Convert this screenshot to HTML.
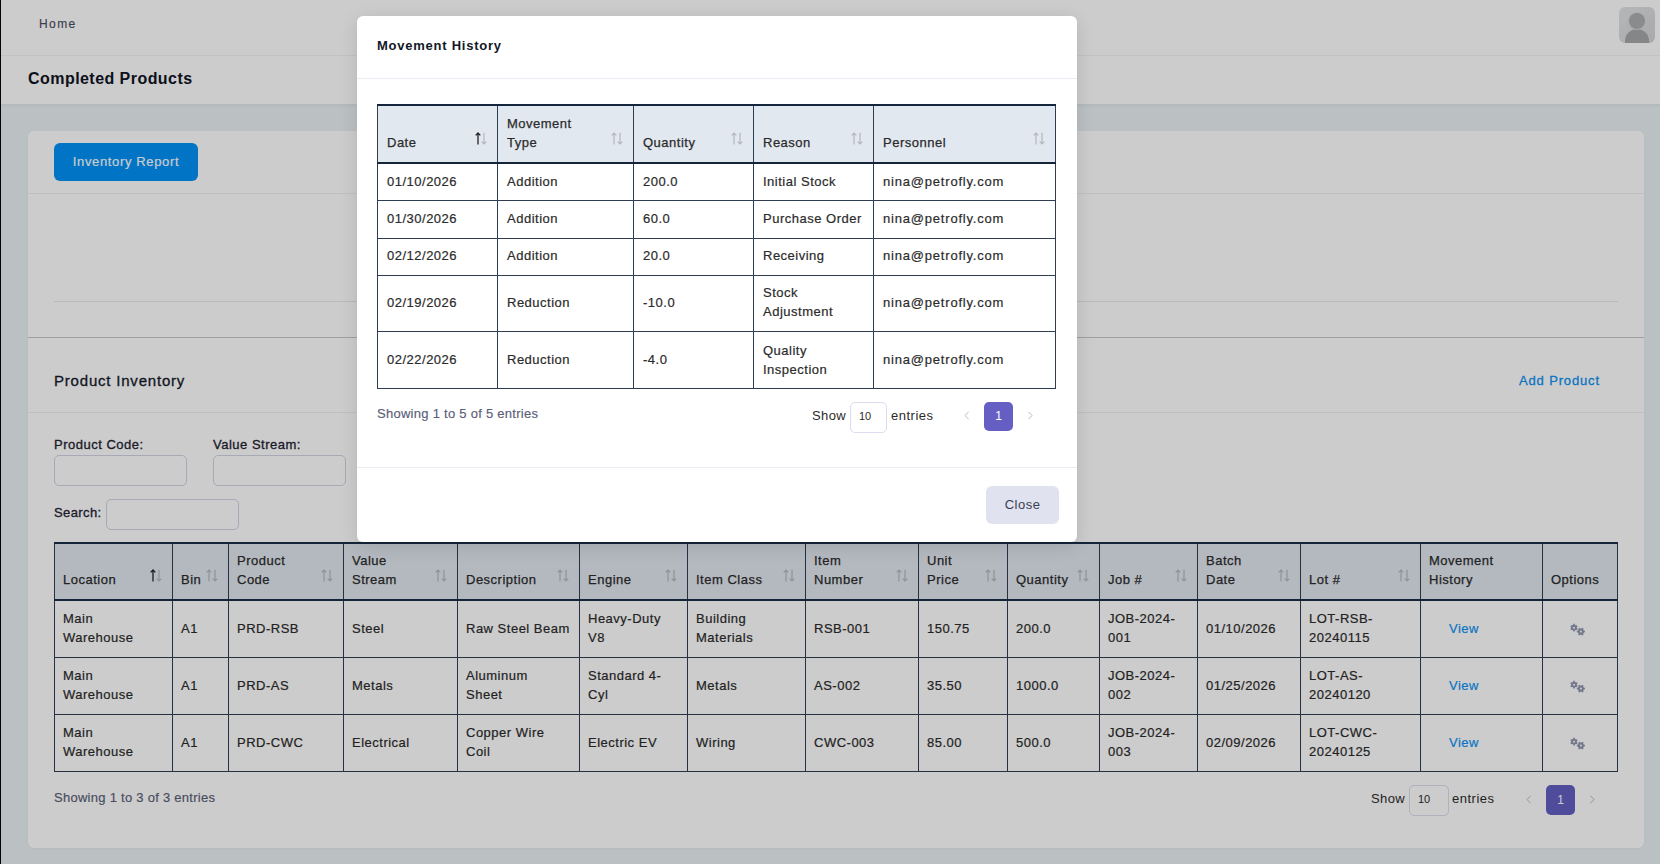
<!DOCTYPE html>
<html><head><meta charset="utf-8">
<style>
*{box-sizing:border-box;margin:0;padding:0}
html,body{width:1660px;height:864px;overflow:hidden}
body{position:relative;background:#eaf2f4;font-family:"Liberation Sans",sans-serif;color:#2b2b2b;font-size:13px;letter-spacing:.5px}
.abs{position:absolute}
.lb{left:0;top:0;width:1px;height:864px;background:#06060e}
.hdr{left:1px;top:0;width:1659px;height:56px;background:#fff;border-bottom:1px solid #f2f3f7}
.home{left:39px;top:17px;font-size:12px;color:#4a4e64;letter-spacing:1.4px}
.avatar{left:1619px;top:7px;width:36px;height:36px;border-radius:6px;background:linear-gradient(135deg,#e4e5e7,#d2d3d5);overflow:hidden}
.avatar .hd{position:absolute;left:10px;top:5.5px;width:16px;height:16px;border-radius:50%;background:#adaeb1;box-shadow:0 0 0 1px #d6d7d9}
.avatar .bd{position:absolute;left:6px;top:22px;width:24px;height:20px;border-radius:12px 12px 0 0;background:#a7a8ab}
.tbar{left:1px;top:56px;width:1659px;height:48px;background:#fff;box-shadow:0 2px 3px rgba(20,40,50,.05)}
.ttl{left:28px;top:70px;font-size:16px;font-weight:bold;color:#0f1424;letter-spacing:.45px}
.card{left:28px;top:131px;width:1616px;height:717px;background:#fff;border-radius:6px;box-shadow:0 1px 3px rgba(20,30,40,.05)}
.btn1{left:54px;top:143px;width:144px;height:38px;border-radius:6px;background:#0392f7;color:#fff;font-size:13px;line-height:38px;text-align:center;letter-spacing:.65px}
.hline{height:1px;background:#f0f1f5}
.input{border:1px solid #d2d4e4;border-radius:5px;background:#fff;height:31px;width:133px}
table{border-collapse:collapse;table-layout:fixed}
td,th{font-weight:normal;text-align:left;vertical-align:middle;border:1px solid #2f3d52}
th{background:#e2e8f0;vertical-align:bottom;position:relative}
.srt{position:absolute;right:10px;bottom:17px;width:11px;height:12px}

.mt td,.mt th{padding:9px 8px 9px 9px;line-height:18.5px;}.mt td{line-height:19px;padding-top:8px;padding-bottom:8px;border:1px solid #2f3d52}
.mt thead th{border-top:2px solid #15253c;border-bottom:2px solid #15253c;padding:9px 26px 10px 9px}
.srt{position:absolute;right:10px;bottom:17px;width:12px;height:13px}

.pt td,.pt th{padding:8px 8px 10px 8px;line-height:19px;border:1px solid #2f3d52}
.pt thead th{border-top:2px solid #1b2d46;border-bottom:2px solid #1b2d46;padding:7px 24px 10px 8px;height:57px}
.pt .ctr{text-align:left;padding-left:28px}
.lnk{color:#0e92f4}
td{-webkit-text-stroke:.2px currentColor}th{-webkit-text-stroke:.25px currentColor}.md{-webkit-text-stroke:.3px currentColor}.rg{-webkit-text-stroke:.15px currentColor}
.mt tr.up td{padding-top:7px;padding-bottom:9px}
</style></head><body>
<div class="abs lb"></div>
<div class="abs hdr"></div>
<div class="abs rg home">Home</div>
<div class="abs avatar"><div class="bd"></div><div class="hd"></div></div>
<div class="abs tbar"></div>
<div class="abs ttl">Completed Products</div>

<div class="abs card"></div>
<div class="abs rg btn1">Inventory Report</div>
<div class="abs hline" style="left:28px;top:193px;width:1616px"></div>
<div class="abs hline" style="left:54px;top:301px;width:1564px;background:#e6e7ee"></div>
<div class="abs hline" style="left:28px;top:337px;width:1616px;background:#c8c8c8"></div>



<div class="abs md" style="left:54px;top:372px;font-size:15px;color:#141a2b;letter-spacing:.8px">Product Inventory</div>
<div class="abs md lnk" style="left:1519px;top:373px;font-size:13px;letter-spacing:.85px">Add Product</div>
<div class="abs hline" style="left:28px;top:412px;width:1616px"></div>
<div class="abs md" style="left:54px;top:437px;font-size:13px;color:#1f2333;letter-spacing:.5px">Product Code:</div>
<div class="abs md" style="left:213px;top:437px;font-size:13px;color:#1f2333;letter-spacing:.5px">Value Stream:</div>
<div class="abs input" style="left:54px;top:455px"></div>
<div class="abs input" style="left:213px;top:455px"></div>
<div class="abs md" style="left:54px;top:505px;font-size:13px;color:#1f2333;letter-spacing:.4px">Search:</div>
<div class="abs input" style="left:106px;top:499px"></div>
<table class="abs pt" style="left:54px;top:542px;width:1564px"><colgroup><col style="width:118px"><col style="width:56px"><col style="width:115px"><col style="width:114px"><col style="width:122px"><col style="width:108px"><col style="width:118px"><col style="width:113px"><col style="width:89px"><col style="width:92px"><col style="width:98px"><col style="width:103px"><col style="width:120px"><col style="width:122px"><col style="width:75px"></colgroup><thead><tr><th>Location<svg class="srt" viewBox="0 0 12 13"><path d="M3 12.5V1M.7 3.4L3 1l2.3 2.4" stroke="#222" stroke-width="1.3" fill="none"/><path d="M9 .8V12M6.7 9.6L9 12l2.3-2.4" stroke="#b3b7be" stroke-width="1.2" fill="none"/></svg></th><th>Bin<svg class="srt" viewBox="0 0 12 13"><path d="M3 12.5V1M.7 3.4L3 1l2.3 2.4" stroke="#b3b7be" stroke-width="1.2" fill="none"/><path d="M9 .8V12M6.7 9.6L9 12l2.3-2.4" stroke="#b3b7be" stroke-width="1.2" fill="none"/></svg></th><th>Product<br>Code<svg class="srt" viewBox="0 0 12 13"><path d="M3 12.5V1M.7 3.4L3 1l2.3 2.4" stroke="#b3b7be" stroke-width="1.2" fill="none"/><path d="M9 .8V12M6.7 9.6L9 12l2.3-2.4" stroke="#b3b7be" stroke-width="1.2" fill="none"/></svg></th><th>Value<br>Stream<svg class="srt" viewBox="0 0 12 13"><path d="M3 12.5V1M.7 3.4L3 1l2.3 2.4" stroke="#b3b7be" stroke-width="1.2" fill="none"/><path d="M9 .8V12M6.7 9.6L9 12l2.3-2.4" stroke="#b3b7be" stroke-width="1.2" fill="none"/></svg></th><th>Description<svg class="srt" viewBox="0 0 12 13"><path d="M3 12.5V1M.7 3.4L3 1l2.3 2.4" stroke="#b3b7be" stroke-width="1.2" fill="none"/><path d="M9 .8V12M6.7 9.6L9 12l2.3-2.4" stroke="#b3b7be" stroke-width="1.2" fill="none"/></svg></th><th>Engine<svg class="srt" viewBox="0 0 12 13"><path d="M3 12.5V1M.7 3.4L3 1l2.3 2.4" stroke="#b3b7be" stroke-width="1.2" fill="none"/><path d="M9 .8V12M6.7 9.6L9 12l2.3-2.4" stroke="#b3b7be" stroke-width="1.2" fill="none"/></svg></th><th>Item Class<svg class="srt" viewBox="0 0 12 13"><path d="M3 12.5V1M.7 3.4L3 1l2.3 2.4" stroke="#b3b7be" stroke-width="1.2" fill="none"/><path d="M9 .8V12M6.7 9.6L9 12l2.3-2.4" stroke="#b3b7be" stroke-width="1.2" fill="none"/></svg></th><th>Item<br>Number<svg class="srt" viewBox="0 0 12 13"><path d="M3 12.5V1M.7 3.4L3 1l2.3 2.4" stroke="#b3b7be" stroke-width="1.2" fill="none"/><path d="M9 .8V12M6.7 9.6L9 12l2.3-2.4" stroke="#b3b7be" stroke-width="1.2" fill="none"/></svg></th><th>Unit<br>Price<svg class="srt" viewBox="0 0 12 13"><path d="M3 12.5V1M.7 3.4L3 1l2.3 2.4" stroke="#b3b7be" stroke-width="1.2" fill="none"/><path d="M9 .8V12M6.7 9.6L9 12l2.3-2.4" stroke="#b3b7be" stroke-width="1.2" fill="none"/></svg></th><th>Quantity<svg class="srt" viewBox="0 0 12 13"><path d="M3 12.5V1M.7 3.4L3 1l2.3 2.4" stroke="#b3b7be" stroke-width="1.2" fill="none"/><path d="M9 .8V12M6.7 9.6L9 12l2.3-2.4" stroke="#b3b7be" stroke-width="1.2" fill="none"/></svg></th><th>Job #<svg class="srt" viewBox="0 0 12 13"><path d="M3 12.5V1M.7 3.4L3 1l2.3 2.4" stroke="#b3b7be" stroke-width="1.2" fill="none"/><path d="M9 .8V12M6.7 9.6L9 12l2.3-2.4" stroke="#b3b7be" stroke-width="1.2" fill="none"/></svg></th><th>Batch<br>Date<svg class="srt" viewBox="0 0 12 13"><path d="M3 12.5V1M.7 3.4L3 1l2.3 2.4" stroke="#b3b7be" stroke-width="1.2" fill="none"/><path d="M9 .8V12M6.7 9.6L9 12l2.3-2.4" stroke="#b3b7be" stroke-width="1.2" fill="none"/></svg></th><th>Lot #<svg class="srt" viewBox="0 0 12 13"><path d="M3 12.5V1M.7 3.4L3 1l2.3 2.4" stroke="#b3b7be" stroke-width="1.2" fill="none"/><path d="M9 .8V12M6.7 9.6L9 12l2.3-2.4" stroke="#b3b7be" stroke-width="1.2" fill="none"/></svg></th><th>Movement<br>History</th><th>Options</th></tr></thead><tbody><tr><td>Main<br>Warehouse</td><td>A1</td><td>PRD-RSB</td><td>Steel</td><td>Raw Steel Beam</td><td>Heavy-Duty<br>V8</td><td>Building<br>Materials</td><td>RSB-001</td><td>150.75</td><td>200.0</td><td>JOB-2024-<br>001</td><td>01/10/2026</td><td>LOT-RSB-<br>20240115</td><td class="ctr"><span class="lnk">View</span></td><td><svg width="18" height="18" viewBox="0 0 18 18" style="display:block;margin-left:17px"><path fill-rule="evenodd" fill="#9095ae" d="M6.84 5.82 L6.69 4.86 L5.31 4.86 L5.16 5.82 L3.92 6.53 L3.02 6.18 L2.33 7.38 L3.09 7.98 L3.09 9.42 L2.33 10.02 L3.02 11.22 L3.92 10.87 L5.16 11.58 L5.31 12.54 L6.69 12.54 L6.84 11.58 L8.08 10.87 L8.98 11.22 L9.67 10.02 L8.91 9.42 L8.91 7.98 L9.67 7.38 L8.98 6.18 L8.08 6.53ZM5.00 8.70 a1.00 1.00 0 1 0 2.00 0 a1.00 1.00 0 1 0 -2.00 0ZM15.17 10.42 L15.55 9.47 L14.29 8.74 L13.65 9.54 L12.15 9.54 L11.51 8.74 L10.25 9.47 L10.63 10.42 L9.88 11.72 L8.86 11.87 L8.86 13.33 L9.88 13.48 L10.63 14.78 L10.25 15.73 L11.51 16.46 L12.15 15.66 L13.65 15.66 L14.29 16.46 L15.55 15.73 L15.17 14.78 L15.92 13.48 L16.94 13.33 L16.94 11.87 L15.92 11.72ZM11.85 12.60 a1.05 1.05 0 1 0 2.10 0 a1.05 1.05 0 1 0 -2.10 0Z"/></svg></td></tr><tr><td>Main<br>Warehouse</td><td>A1</td><td>PRD-AS</td><td>Metals</td><td>Aluminum<br>Sheet</td><td>Standard 4-<br>Cyl</td><td>Metals</td><td>AS-002</td><td>35.50</td><td>1000.0</td><td>JOB-2024-<br>002</td><td>01/25/2026</td><td>LOT-AS-<br>20240120</td><td class="ctr"><span class="lnk">View</span></td><td><svg width="18" height="18" viewBox="0 0 18 18" style="display:block;margin-left:17px"><path fill-rule="evenodd" fill="#9095ae" d="M6.84 5.82 L6.69 4.86 L5.31 4.86 L5.16 5.82 L3.92 6.53 L3.02 6.18 L2.33 7.38 L3.09 7.98 L3.09 9.42 L2.33 10.02 L3.02 11.22 L3.92 10.87 L5.16 11.58 L5.31 12.54 L6.69 12.54 L6.84 11.58 L8.08 10.87 L8.98 11.22 L9.67 10.02 L8.91 9.42 L8.91 7.98 L9.67 7.38 L8.98 6.18 L8.08 6.53ZM5.00 8.70 a1.00 1.00 0 1 0 2.00 0 a1.00 1.00 0 1 0 -2.00 0ZM15.17 10.42 L15.55 9.47 L14.29 8.74 L13.65 9.54 L12.15 9.54 L11.51 8.74 L10.25 9.47 L10.63 10.42 L9.88 11.72 L8.86 11.87 L8.86 13.33 L9.88 13.48 L10.63 14.78 L10.25 15.73 L11.51 16.46 L12.15 15.66 L13.65 15.66 L14.29 16.46 L15.55 15.73 L15.17 14.78 L15.92 13.48 L16.94 13.33 L16.94 11.87 L15.92 11.72ZM11.85 12.60 a1.05 1.05 0 1 0 2.10 0 a1.05 1.05 0 1 0 -2.10 0Z"/></svg></td></tr><tr><td>Main<br>Warehouse</td><td>A1</td><td>PRD-CWC</td><td>Electrical</td><td>Copper Wire<br>Coil</td><td>Electric EV</td><td>Wiring</td><td>CWC-003</td><td>85.00</td><td>500.0</td><td>JOB-2024-<br>003</td><td>02/09/2026</td><td>LOT-CWC-<br>20240125</td><td class="ctr"><span class="lnk">View</span></td><td><svg width="18" height="18" viewBox="0 0 18 18" style="display:block;margin-left:17px"><path fill-rule="evenodd" fill="#9095ae" d="M6.84 5.82 L6.69 4.86 L5.31 4.86 L5.16 5.82 L3.92 6.53 L3.02 6.18 L2.33 7.38 L3.09 7.98 L3.09 9.42 L2.33 10.02 L3.02 11.22 L3.92 10.87 L5.16 11.58 L5.31 12.54 L6.69 12.54 L6.84 11.58 L8.08 10.87 L8.98 11.22 L9.67 10.02 L8.91 9.42 L8.91 7.98 L9.67 7.38 L8.98 6.18 L8.08 6.53ZM5.00 8.70 a1.00 1.00 0 1 0 2.00 0 a1.00 1.00 0 1 0 -2.00 0ZM15.17 10.42 L15.55 9.47 L14.29 8.74 L13.65 9.54 L12.15 9.54 L11.51 8.74 L10.25 9.47 L10.63 10.42 L9.88 11.72 L8.86 11.87 L8.86 13.33 L9.88 13.48 L10.63 14.78 L10.25 15.73 L11.51 16.46 L12.15 15.66 L13.65 15.66 L14.29 16.46 L15.55 15.73 L15.17 14.78 L15.92 13.48 L16.94 13.33 L16.94 11.87 L15.92 11.72ZM11.85 12.60 a1.05 1.05 0 1 0 2.10 0 a1.05 1.05 0 1 0 -2.10 0Z"/></svg></td></tr></tbody></table>
<div class="abs rg" style="left:54px;top:790px;font-size:13px;color:#5a6078;letter-spacing:.27px">Showing 1 to 3 of 3 entries</div>
<div class="abs" style="left:1371px;top:791px;font-size:13px;color:#2b2b2b;letter-spacing:.4px">Show</div>
<div class="abs" style="left:1409px;top:785px;width:40px;height:31px;border:1px solid #dcdcef;border-radius:5px;background:#fff"></div>
<div class="abs" style="left:1418px;top:793px;font-size:11px;color:#2b2b2b;letter-spacing:0">10</div>
<div class="abs" style="left:1452px;top:791px;font-size:13px;color:#2b2b2b;letter-spacing:.5px">entries</div>
<svg class="abs" style="left:1526px;top:795px" width="6" height="9" viewBox="0 0 6 9"><path d="M4.6.8L1 4.5l3.6 3.7" stroke="#b9bbc9" stroke-width="1" fill="none"/></svg>
<div class="abs" style="left:1546px;top:785px;width:29px;height:30px;border-radius:5px;background:#655fc4;color:#fff;font-size:12px;line-height:30px;text-align:center;letter-spacing:0">1</div>
<svg class="abs" style="left:1589px;top:795px" width="6" height="9" viewBox="0 0 6 9"><path d="M1.4.8L5 4.5 1.4 8.2" stroke="#b9bbc9" stroke-width="1" fill="none"/></svg>
<div class="abs" style="left:0;top:0;width:1660px;height:864px;background:rgba(0,0,0,.2)"></div>
<div class="abs modal" style="left:357px;top:16px;width:720px;height:526px;background:#fff;border-radius:6px;box-shadow:0 4px 18px rgba(0,0,0,.12)">
</div>
<div class="abs mttl" style="left:377px;top:38px;font-size:13px;font-weight:bold;color:#111827;letter-spacing:.75px">Movement History</div>
<div class="abs hline" style="left:357px;top:78px;width:720px;background:#e9edf3"></div>
<table class="abs mt" style="left:377px;top:104px;width:678px">
<colgroup><col style="width:120px"><col style="width:136px"><col style="width:120px"><col style="width:120px"><col style="width:182px"></colgroup>
<thead><tr><th>Date<svg class="srt" viewBox="0 0 12 13"><path d="M3 12.5V1M.7 3.4L3 1l2.3 2.4" stroke="#222" stroke-width="1.3" fill="none"/><path d="M9 .8V12M6.7 9.6L9 12l2.3-2.4" stroke="#b3b7be" stroke-width="1.2" fill="none"/></svg></th><th>Movement<br>Type<svg class="srt" viewBox="0 0 12 13"><path d="M3 12.5V1M.7 3.4L3 1l2.3 2.4" stroke="#b3b7be" stroke-width="1.2" fill="none"/><path d="M9 .8V12M6.7 9.6L9 12l2.3-2.4" stroke="#b3b7be" stroke-width="1.2" fill="none"/></svg></th><th>Quantity<svg class="srt" viewBox="0 0 12 13"><path d="M3 12.5V1M.7 3.4L3 1l2.3 2.4" stroke="#b3b7be" stroke-width="1.2" fill="none"/><path d="M9 .8V12M6.7 9.6L9 12l2.3-2.4" stroke="#b3b7be" stroke-width="1.2" fill="none"/></svg></th><th>Reason<svg class="srt" viewBox="0 0 12 13"><path d="M3 12.5V1M.7 3.4L3 1l2.3 2.4" stroke="#b3b7be" stroke-width="1.2" fill="none"/><path d="M9 .8V12M6.7 9.6L9 12l2.3-2.4" stroke="#b3b7be" stroke-width="1.2" fill="none"/></svg></th><th>Personnel<svg class="srt" viewBox="0 0 12 13"><path d="M3 12.5V1M.7 3.4L3 1l2.3 2.4" stroke="#b3b7be" stroke-width="1.2" fill="none"/><path d="M9 .8V12M6.7 9.6L9 12l2.3-2.4" stroke="#b3b7be" stroke-width="1.2" fill="none"/></svg></th></tr></thead>
<tbody>
<tr style="height:37px"><td>01/10/2026</td><td>Addition</td><td>200.0</td><td>Initial Stock</td><td style="letter-spacing:.8px">nina@petrofly.com</td></tr>
<tr class="up" style="height:38px"><td>01/30/2026</td><td>Addition</td><td>60.0</td><td>Purchase Order</td><td style="letter-spacing:.8px">nina@petrofly.com</td></tr>
<tr class="up" style="height:37px"><td>02/12/2026</td><td>Addition</td><td>20.0</td><td>Receiving</td><td style="letter-spacing:.8px">nina@petrofly.com</td></tr>
<tr class="up" style="height:56px"><td>02/19/2026</td><td>Reduction</td><td>-10.0</td><td>Stock Adjustment</td><td style="letter-spacing:.8px">nina@petrofly.com</td></tr>
<tr style="height:57px"><td>02/22/2026</td><td>Reduction</td><td>-4.0</td><td>Quality Inspection</td><td style="letter-spacing:.8px">nina@petrofly.com</td></tr>
</tbody></table>

<div class="abs rg" style="left:377px;top:406px;font-size:13px;color:#5a6078;letter-spacing:.27px">Showing 1 to 5 of 5 entries</div>
<div class="abs" style="left:812px;top:408px;font-size:13px;color:#2b2b2b;letter-spacing:.4px">Show</div>
<div class="abs sel" style="left:850px;top:402px;width:37px;height:31px;border:1px solid #dcdcef;border-radius:5px;background:#fff"></div>
<div class="abs" style="left:859px;top:410px;font-size:11px;color:#2b2b2b;letter-spacing:0">10</div>
<div class="abs" style="left:891px;top:408px;font-size:13px;color:#2b2b2b;letter-spacing:.5px">entries</div>
<svg class="abs" style="left:964px;top:411px" width="6" height="9" viewBox="0 0 6 9"><path d="M4.6.8L1 4.5l3.6 3.7" stroke="#b9bbc9" stroke-width="1" fill="none"/></svg>
<div class="abs" style="left:984px;top:402px;width:29px;height:29px;border-radius:5px;background:#655fc4;color:#fff;font-size:12px;line-height:29px;text-align:center;letter-spacing:0">1</div>
<svg class="abs" style="left:1027px;top:411px" width="6" height="9" viewBox="0 0 6 9"><path d="M1.4.8L5 4.5 1.4 8.2" stroke="#b9bbc9" stroke-width="1" fill="none"/></svg>
<div class="abs hline" style="left:357px;top:467px;width:720px;background:#e9edf3"></div>
<div class="abs" style="left:986px;top:486px;width:73px;height:38px;border-radius:6px;background:#e0e3ef;color:#3a3e52;font-size:13px;line-height:38px;text-align:center;letter-spacing:.5px">Close</div>
</body></html>
